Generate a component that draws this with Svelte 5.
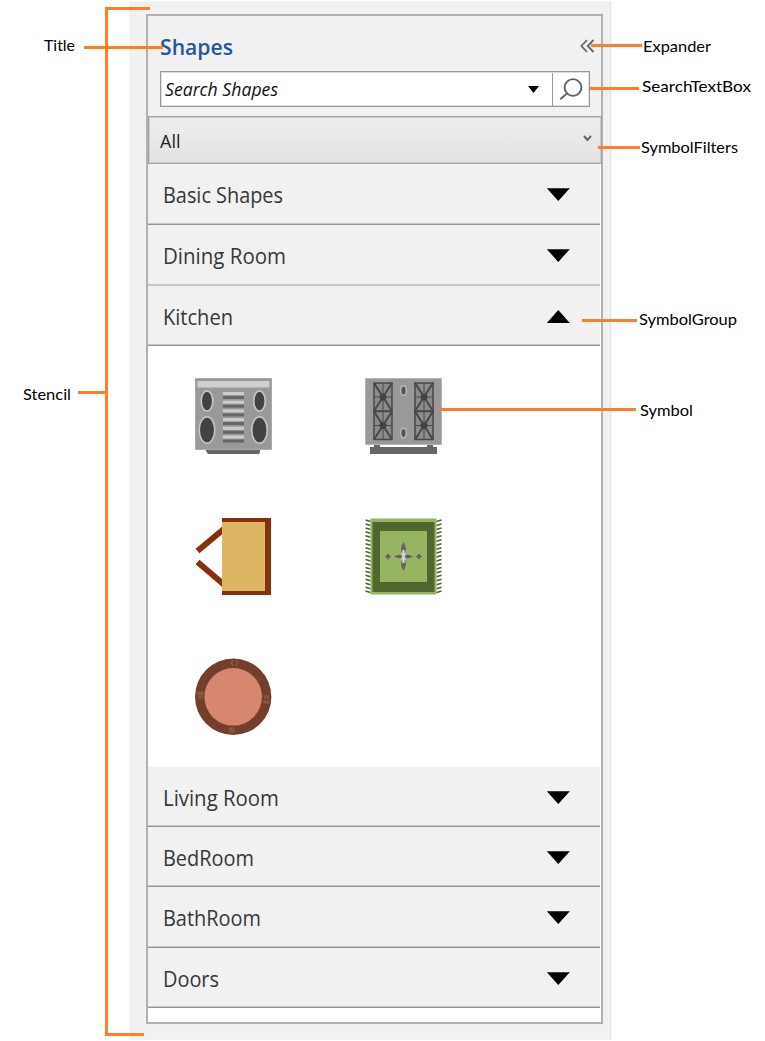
<script>
  const groupsAbove = [
    { name: 'Basic Shapes', width: 120, height: 61 },
    { name: 'Dining Room', width: 123, height: 61 },
    { name: 'Kitchen', width: 70, height: 60, open: true }
  ];
  const groupsBelow = [
    { name: 'Living Room', width: 116, height: 60 },
    { name: 'BedRoom', width: 91, height: 60 },
    { name: 'BathRoom', width: 98, height: 61 },
    { name: 'Doors', width: 56, height: 60 }
  ];
  const notes = [
    { text: 'Title', x: 44, y: 51, w: 31, d: 'M84 47.5H163' },
    { text: 'Expander', x: 643, y: 52, w: 68, d: 'M591 45.5H642' },
    { text: 'SearchTextBox', x: 642, y: 92, w: 109, d: 'M590 88.5H639' },
    { text: 'SymbolFilters', x: 641, y: 153, w: 97, d: 'M598 147.5H640' },
    { text: 'SymbolGroup', x: 639, y: 325, w: 98, d: 'M582 320.5H637' },
    { text: 'Symbol', x: 640, y: 416, w: 53, d: 'M440 409.5H636' },
    { text: 'Stencil', x: 23, y: 400, w: 48, d: 'M78 392.5H106' }
  ];
  const slats = [14, 22.7, 31.4, 40.1, 48.8, 57.5];
  const burners = [
    [9, 5], [9, 33.5], [50, 5], [50, 33.5]
  ];
  const fringe = Array.from({ length: 19 }, (_, i) => 3 + i * 3.95);
</script>

{#snippet row(group)}
  <div class="row" class:light={group.name === 'Dining Room'} style:height="{group.height}px">
    <svg class="label" width="150" height="32">
      <text x="0" y="24" textLength={group.width} lengthAdjust="spacingAndGlyphs">{group.name}</text>
    </svg>
    <svg class="arrow" width="24" height="14" viewBox="0 0 24 14">
      <path d={group.open ? 'M.8 13 12.3 0 23.8 13Z' : 'M.8.2 12.3 12.9 23.8.2Z'} />
    </svg>
  </div>
{/snippet}

<main>
  <section class="surround">
    <div class="stencil">
      <header>
        <div class="title">
          <svg width="90" height="32"><text x="0" y="23" textLength="73" lengthAdjust="spacingAndGlyphs">Shapes</text></svg>
          <svg class="expander" width="15" height="14" viewBox="0 0 15 14"><path d="M7 1 1.4 7 7 13M13.5 1 7.7 7l5.8 6" /></svg>
        </div>
        <div class="search">
          <svg class="placeholder" width="130" height="30"><text x="0" y="22" textLength="113" lengthAdjust="spacingAndGlyphs">Search Shapes</text></svg>
          <svg class="drop" width="11" height="7" viewBox="0 0 11 7"><path d="M0 0h11L5.5 7Z" /></svg>
          <div class="find">
            <svg width="25" height="25" viewBox="0 0 25 25"><circle cx="14" cy="10.5" r="8.4" /><path d="M8 16.5 1.3 22.3" /></svg>
          </div>
        </div>
      </header>
      <div class="filter">
        <span>All</span>
        <svg width="9" height="7" viewBox="0 0 9 7"><path d="m1 1 3.5 4L8 1" /></svg>
      </div>
      {#each groupsAbove as group}{@render row(group)}{/each}
      <div class="symbols">
        <svg viewBox="0 0 77 77">
          <path fill="#666" d="M11 70h54v4l-1 2H13l-2-3Z" />
          <path fill="#999" stroke="#aaa" d="M.5.5h76v71H.5Z" />
          <path fill="#cfcfcf" d="M2.5 3h72v6.5h-72Z" />
          {#each slats as y}
            <path fill="#ccc" d="M28 {y}h21v3H28Z" />
            <path fill="#666" d="M28 {y + 4}h21v3H28Z" />
          {/each}
          <g fill="#434241" stroke="#c5c5c5" stroke-width="1.7">
            <ellipse cx="12" cy="23" rx="5.8" ry="10" /><ellipse cx="64.5" cy="23" rx="5.8" ry="10" />
            <ellipse cx="12" cy="52" rx="7.8" ry="13.2" /><ellipse cx="64.5" cy="52" rx="7.8" ry="13.2" />
          </g>
        </svg>
        <svg viewBox="0 0 77 77">
          <path fill="#666" d="M9 66h6v3h47v-3h6v3h4v7H5v-7h4Z" />
          <path fill="#999" stroke="#b6b6b6" d="M.5.5h76v66H.5Z" />
          {#each burners as [x, y]}
            <g transform="translate({x} {y})">
              <path fill="#8b8b8b" stroke="#484848" stroke-width="1.5" d="M0 0h18v28H0Z" />
              <path fill="none" stroke="#484848" stroke-width="2" d="m0 0 18 28M18 0 0 28" />
              <path stroke="#484848" d="M9 0v28M0 14h18" /><circle cx="9" cy="14" r="3.5" fill="#444" />
            </g>
          {/each}
          <g fill="#555" stroke="#bbb" stroke-width="1.4"><ellipse cx="38.5" cy="12.5" rx="2.8" ry="4.8" /><ellipse cx="38.5" cy="55" rx="2.8" ry="4.8" /></g>
        </svg>
        <svg viewBox="0 0 77 77">
          <path fill="none" stroke="#87300f" stroke-width="6" d="M2.5 33 30 10M2.5 44 30 67.5" />
          <path fill="#87300f" d="M27 0h49v77H27Z" /><path fill="#deb562" d="M27 4h43v69H27Z" />
        </svg>
        <svg viewBox="0 0 77 77">
          {#each fringe as y}<path stroke="#4e642f" stroke-width="1.6" d="m.5 {y - 1} 5 1.5M76.5 {y - 1}l-5 1.5" />{/each}
          <path fill="#97b561" d="M5.5.5h66v76h-66Z" /><path fill="#4f662f" d="M7.5 4h62v70h-62Z" /><path fill="#97b561" d="M15 13h47v51H15Z" />
          <path fill="#ccc" d="M35.5 35.5h6v6h-6Z" />
          <path fill="#68606a" d="M38.5 24q5 8 0 12-5-4 0-12M38.5 53q5-8 0-12-5 4 0 12M29 38.5q8-4 8 0t-8 0M48 38.5q-8-4-8 0t8 0M20 38.5l3-3 3 3-3 3ZM51 38.5l3-3 3 3-3 3Z" />
          <path stroke="#ddd" stroke-width="2" d="M38.5 32v5M38.5 40v5" />
        </svg>
        <svg viewBox="0 0 77 77">
          <circle cx="38.2" cy="38.8" r="38.2" fill="#743e2d" /><circle cx="38.2" cy="38.8" r="28.8" fill="#d7866f" />
          <path fill="none" stroke="#9c604d" d="M38 2q-3 3 0 6M41 2q3 3 0 6M35 70h4v4h-4ZM35 70l4 4M3 34h2v2H3ZM6 34h2v2H6ZM3 38h5M3 40h5M69 38h5M69 40h5M69 43h2v2h-2ZM72 43h2v2h-2Z" />
        </svg>
      </div>
      {#each groupsBelow as group}{@render row(group)}{/each}
    </div>
  </section>
  <svg class="notes" width="765" height="1041" viewBox="0 0 765 1041">
    <path d="M150 8.5H106.5V1034.5H144" />
    {#each notes as note}
      <path d={note.d} />
      <text x={note.x} y={note.y} textLength={note.w} lengthAdjust="spacingAndGlyphs">{note.text}</text>
    {/each}
  </svg>
</main>

<style>
  :global(body) { background: #fff; }
  main { position: relative; width: 765px; height: 1041px; box-sizing: border-box; padding: 2px 0 0 130px; font-family: "Open Sans", sans-serif; }
  svg { display: block; flex: none; overflow: visible; }
  .surround { width: 481px; height: 1037px; box-sizing: border-box; padding: 12px 8px 14px 16px; background: #f1f1f1; outline: 1px solid #f5f5f5; border-right: 1px solid #e4e4e4; }
  .stencil { width: 457px; height: 1010px; box-sizing: border-box; border: 2px solid #b1b1b1; background: #fff; }
  header { height: 100px; box-sizing: border-box; padding: 16px 11px 0 12px; background: #f1f1f1; }
  .title { display: flex; justify-content: space-between; height: 39px; }
  .title text { font-size: 22px; font-weight: 600; fill: #28569d; }
  .expander { margin: 7px -5px 0 0; }
  .expander path { fill: none; stroke: #666; stroke-width: 1.8; }
  .search { display: flex; align-items: center; width: 430px; height: 36px; box-sizing: border-box; border: 1px solid #999; box-shadow: inset 0 0 0 1px #ddd; background: #fff; }
  .placeholder { margin-left: 4px; }
  .placeholder text { font-size: 18.5px; font-style: italic; fill: #111; }
  .drop { margin-left: auto; }
  .find { display: flex; align-items: center; justify-content: center; width: 37px; height: 33px; box-sizing: border-box; margin-left: 13px; border-left: 1px solid #999; }
  .find svg { fill: none; stroke: #606060; stroke-width: 1.9; }
  .filter { display: flex; align-items: center; justify-content: space-between; height: 48px; margin-right: -1px; box-sizing: border-box; padding: 1px 9px 0 11px; border: 1px solid #a4a4a4; box-shadow: inset 0 0 0 1px #ccc; background: linear-gradient(#efefef, #e2e2e2); font-size: 18px; color: #222; }
  .filter svg { margin-bottom: 4px; fill: none; stroke: #666; stroke-width: 2; }
  .row { display: flex; align-items: center; justify-content: space-between; width: 452px; box-sizing: border-box; padding: 2px 30px 0 15px; border-bottom: 1px solid #959595; box-shadow: inset 0 -1px #c6c6c6; background: #f1f1f1; }
  .row.light { border-color: #c8c8c8; }
  .label text { font-size: 21.5px; fill: #373737; }
  .symbols { display: grid; grid-template-columns: 77px 77px; grid-template-rows: 77px 77px 77px; column-gap: 93px; row-gap: 63px; height: 421px; box-sizing: border-box; padding: 32px 47px; }
  .notes { position: absolute; left: 0; top: 0; pointer-events: none; }
  .notes path { fill: none; stroke: #ff7f27; stroke-width: 3; }
  .notes text { font: 16px Lato, sans-serif; fill: #000; }
</style>
